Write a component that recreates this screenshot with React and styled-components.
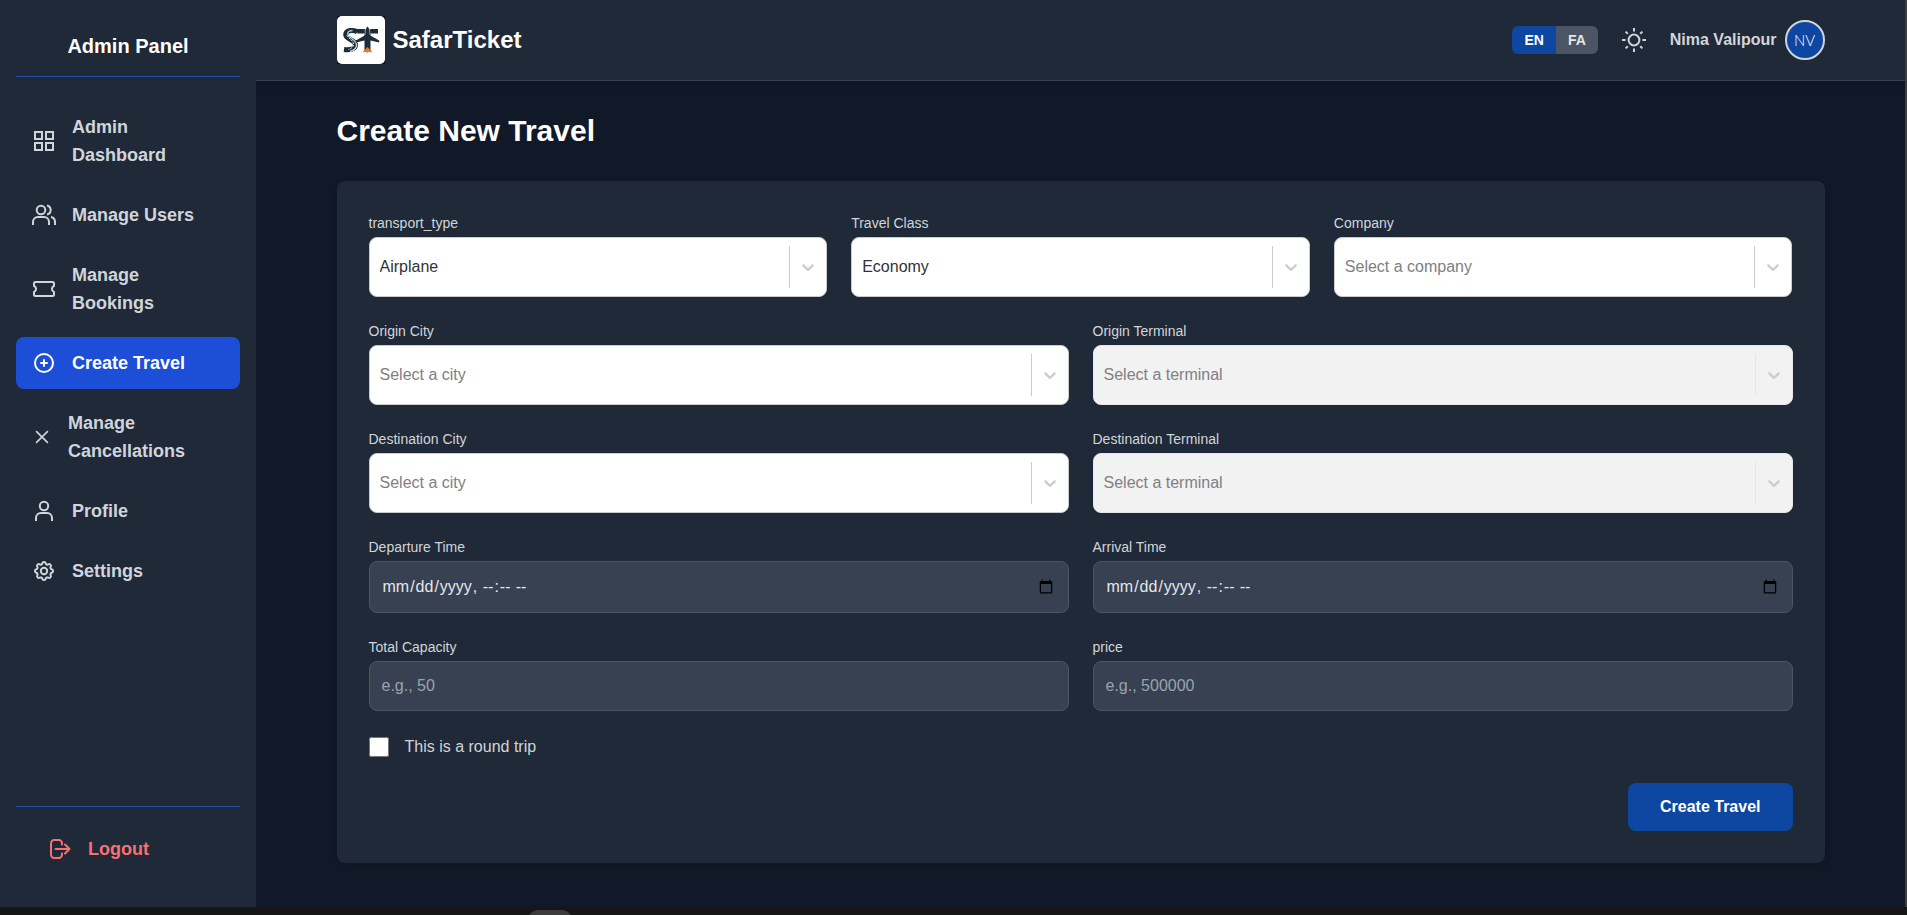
import React from "react";
import styled, { createGlobalStyle } from "styled-components";

const GlobalStyle = createGlobalStyle`
  *, *::before, *::after { box-sizing: border-box; }
  html, body { margin: 0; }
  body {
    background: #161616;
    color: #fff;
    font-family: "Liberation Sans", Arial, sans-serif;
    font-size: 16px;
    line-height: 24px;
  }
  button, input, select { font: inherit; color: inherit; }
`;

const Window = styled.div`
  height: 100vh;
  overflow: hidden;
  display: flex;
  flex-direction: column;
`;

const Shell = styled.div`
  flex: 1;
  min-height: 0;
  display: flex;
  background: #111827;
  border-right: 2px solid #3f3f3f;
`;

const Taskbar = styled.footer`
  height: 8px;
  flex: none;
  overflow: hidden;
  background: #161616;
  padding: 3px 0 0 528px;
`;

const TaskbarHandle = styled.div`
  width: 44px;
  height: 20px;
  border-radius: 10px;
  background: #3c3c3c;
`;

const Sidebar = styled.aside`
  width: 256px;
  flex: none;
  display: flex;
  flex-direction: column;
  padding: 16px;
  background: #1f2937;
  z-index: 1;
`;

const SidebarTitle = styled.h2`
  margin: 0 0 24px;
  padding: 16px 0;
  border-bottom: 1px solid #2250a4;
  font-size: 20px;
  line-height: 28px;
  font-weight: 700;
  text-align: center;
`;

const Nav = styled.nav`
  flex: 1;
  display: flex;
  flex-direction: column;
  gap: 8px;
`;

const NavLink = styled.a`
  display: flex;
  align-items: center;
  gap: 16px;
  padding: 12px 16px;
  border-radius: 8px;
  background: ${(p) => (p.$active ? "#1d4ed8" : "transparent")};
  color: ${(p) => (p.$active ? "#fff" : "#d1d5db")};
  font-size: 18px;
  line-height: 28px;
  font-weight: 600;
  text-decoration: none;
`;

const LogoutArea = styled.div`
  padding: 16px;
  border-top: 1px solid #2250a4;
`;

const LogoutButton = styled.button`
  display: flex;
  align-items: center;
  gap: 16px;
  padding: 12px 16px;
  border: 0;
  background: none;
  color: #f87171;
  font-size: 18px;
  line-height: 28px;
  font-weight: 600;
`;

const Content = styled.div`
  flex: 1;
  min-width: 0;
`;

const Container = styled.div`
  max-width: 1536px;
  margin: 0 auto;
  padding: 0 24px;
`;

const Header = styled.header`
  background: #1f2937;
  border-bottom: 1px solid #374151;
  box-shadow: 0 4px 6px rgba(0, 0, 0, 0.1);
`;

const HeaderBar = styled(Container)`
  display: flex;
  align-items: center;
  justify-content: space-between;
  padding: 16px 24px;
`;

const Brand = styled.a`
  display: flex;
  align-items: center;
  gap: 8px;
  color: #fff;
  font-size: 24px;
  line-height: 32px;
  font-weight: 700;
  text-decoration: none;
`;

const HeaderTools = styled.div`
  display: flex;
  align-items: center;
  gap: 24px;
`;

const LanguageSwitch = styled.div`
  display: flex;
  border-radius: 6px;
  overflow: hidden;
`;

const LanguageButton = styled.button`
  padding: 4px 12px;
  border: 0;
  background: ${(p) => (p.$active ? "#0d47a1" : "#4b5563")};
  color: ${(p) => (p.$active ? "#fff" : "#e5e7eb")};
  font-size: 14px;
  line-height: 20px;
  font-weight: 600;
`;

const ThemeButton = styled.button`
  display: flex;
  padding: 0;
  border: 0;
  background: none;
  color: #d1d5db;
`;

const Account = styled.a`
  display: flex;
  align-items: center;
  gap: 8px;
  color: #d1d5db;
  font-weight: 600;
  text-decoration: none;
`;

const Avatar = styled.span`
  width: 40px;
  height: 40px;
  display: flex;
  align-items: center;
  justify-content: center;
  border: 2px solid #d1d5db;
  border-radius: 50%;
  background: #0d47a1;
  color: #fff;
  font-family: Lato, Inter, sans-serif;
  font-size: 15px;
  font-weight: 300;
`;

const Main = styled(Container).attrs({ as: "main" })`
  padding: 32px 24px;
`;

const PageTitle = styled.h1`
  margin: 0 0 32px;
  font-size: 30px;
  line-height: 36px;
  font-weight: 700;
`;

const Card = styled.form`
  display: flex;
  flex-direction: column;
  gap: 24px;
  padding: 32px;
  border-radius: 8px;
  background: #1f2937;
  box-shadow: 0 4px 6px rgba(0, 0, 0, 0.1);
`;

const FieldRow = styled.div`
  display: grid;
  grid-template-columns: repeat(${(p) => p.$columns}, minmax(0, 1fr));
  gap: 24px;
`;

const Field = styled.div`
  display: flex;
  flex-direction: column;
`;

const Label = styled.label`
  margin-bottom: 4px;
  color: #d1d5db;
  font-size: 14px;
  line-height: 20px;
`;

const SelectBox = styled.div`
  position: relative;
  height: 60px;
`;

const Select = styled.select`
  width: 100%;
  height: 100%;
  padding: 0 48px 0 10px;
  appearance: none;
  border: 1px solid ${(p) => (p.disabled ? "#e6e6e6" : "#cccccc")};
  border-radius: 8px;
  background: ${(p) => (p.disabled ? "#f2f2f2" : "#fff")};
  color: ${(p) => (p.$empty ? "#808080" : "#333333")};
  opacity: 1;
`;

const SelectIndicator = styled.span`
  position: absolute;
  top: 9px;
  right: 1px;
  bottom: 9px;
  width: 37px;
  display: flex;
  align-items: center;
  justify-content: center;
  border-left: 1px solid ${(p) => (p.$muted ? "#e6e6e6" : "#cccccc")};
  color: #cccccc;
  pointer-events: none;
`;

const Input = styled.input`
  width: 100%;
  height: ${(p) => (p.type === "datetime-local" ? "52px" : "50px")};
  padding: 12px;
  border: 1px solid #4b5563;
  border-radius: 8px;
  background: #374151;
  color: #e5e7eb;
  &::placeholder { color: #9ca3af; opacity: 1; }
`;

const CheckRow = styled.div`
  display: flex;
  align-items: center;
  gap: 16px;
  color: #d1d5db;
`;

const Checkbox = styled.input`
  width: 20px;
  height: 20px;
  margin: 0;
`;

const Actions = styled.div`
  display: flex;
  justify-content: flex-end;
`;

const SubmitButton = styled.button`
  padding: 12px 32px;
  border: 0;
  border-radius: 8px;
  background: #0d47a1;
  color: #fff;
  font-weight: 600;
`;

const IconSvg = styled.svg`
  flex: none;
`;

const Icon = ({ size = 24, width = 2, children }) => (
  <IconSvg width={size} height={size} viewBox="0 0 24 24" fill="none" stroke="currentColor"
    strokeWidth={width} strokeLinecap="round" strokeLinejoin="round" aria-hidden="true">
    {children}
  </IconSvg>
);

const icons = {
  dashboard: (
    <Icon>
      <path strokeLinejoin="miter" d="M3 3h7v7H3zM14 3h7v7h-7zM3 14h7v7H3zM14 14h7v7h-7z" />
    </Icon>
  ),
  users: (
    <Icon>
      <path strokeLinecap="butt" d="M1 22v-3a5 5 0 0 1 5-5h6a5 5 0 0 1 5 5v3M23 22v-3a5 5 0 0 0-4-4.900M15 2.500a4.600 4.600 0 0 1 0 9" />
      <circle cx="9" cy="7" r="4.300" />
    </Icon>
  ),
  ticket: (
    <Icon>
      <path d="M2 9V6.500A1.500 1.500 0 0 1 3.500 5h17A1.500 1.500 0 0 1 22 6.500V9a3.200 3.200 0 0 0 0 6v2.500a1.500 1.500 0 0 1-1.500 1.500h-17A1.500 1.500 0 0 1 2 17.500V15a3.200 3.200 0 0 0 0-6z" />
    </Icon>
  ),
  create: (
    <Icon>
      <circle cx="12" cy="12" r="9" />
      <path d="M12 9v6M9 12h6" />
    </Icon>
  ),
  cancel: (
    <Icon size={20}>
      <path d="m5.500 5.500 13 13M18.500 5.500l-13 13" />
    </Icon>
  ),
  profile: (
    <Icon>
      <circle cx="12" cy="7" r="4.200" />
      <path strokeLinecap="butt" d="M4 22v-3a5 5 0 0 1 5-5h6a5 5 0 0 1 5 5v3" />
    </Icon>
  ),
  settings: (
    <Icon>
      <circle cx="12" cy="12" r="3.200" />
      <path d="M10.3 4.300c.4-1.750 3-1.750 3.400 0a1.700 1.700 0 0 0 2.600 1.100c1.500-1 3.300.9 2.400 2.400a1.700 1.700 0 0 0 1 2.500c1.800.4 1.800 3 0 3.400a1.700 1.700 0 0 0-1 2.600c.9 1.500-.9 3.300-2.400 2.400a1.700 1.700 0 0 0-2.600 1c-.4 1.800-3 1.800-3.400 0a1.700 1.700 0 0 0-2.600-1c-1.500.9-3.300-.9-2.400-2.400a1.700 1.700 0 0 0-1-2.600c-1.800-.4-1.800-3 0-3.400a1.700 1.700 0 0 0 1-2.500c-.9-1.500.9-3.400 2.400-2.400 1 .6 2.300.1 2.600-1.100z" />
    </Icon>
  ),
};

const LogoutIcon = () => (
  <Icon>
    <path d="M14 7.500V6.200a3.200 3.200 0 0 0-3.200-3.200H6.200A3.200 3.200 0 0 0 3 6.200v11.600A3.200 3.200 0 0 0 6.200 21h4.600a3.200 3.200 0 0 0 3.200-3.200v-1.300M7.500 12H21.500M17 7.500l4.500 4.500-4.500 4.500" />
  </Icon>
);

const SunIcon = () => (
  <Icon>
    <circle cx="12" cy="12" r="5.400" />
    <path strokeLinecap="butt" d="M12 0v3.400M12 20.600V24M0 12h3.600M20.400 12H24M3.600 3.600l2.200 2.200M18.200 18.200l2.200 2.200M3.600 20.400l2.200-2.200M18.200 5.800l2.200-2.200" />
  </Icon>
);

const ChevronIcon = () => (
  <svg width="20" height="20" viewBox="0 0 20 20" fill="currentColor" aria-hidden="true">
    <path d="M4.516 7.548c0.436-0.446 1.043-0.481 1.576 0l3.908 3.747 3.908-3.747c0.533-0.481 1.141-0.446 1.574 0 0.436 0.445 0.408 1.197 0 1.615-0.406 0.418-4.695 4.502-4.695 4.502-0.217 0.223-0.502 0.335-0.787 0.335s-0.570-0.112-0.789-0.335c0 0-4.287-4.084-4.695-4.502s-0.436-1.170 0-1.615z" />
  </svg>
);

const Logo = () => (
  <svg width="48" height="48" viewBox="0 0 48 48" aria-hidden="true">
    <path d="M0 0h48v48H0z" fill="#0b0d10" />
    <rect width="48" height="48" rx="5" fill="#fff" />
    <path d="M20.500 16C17 13.300 8.700 14 8.700 18.800c0 4.700 9.800 4.700 9.800 10 0 4.500-5.500 5.400-11.500 4.600" fill="none" stroke="#1b2c3b" strokeWidth="5" />
    <path d="M15.500 14.500c-4 .2-5.500 2-4.500 4.500 1.300 3 8.500 5 8.500 10 0 3-3 5.500-6.500 6.500" fill="none" stroke="#c9d0d6" strokeWidth="1.400" />
    <path d="M10 19.500c2 3.500 7 5 6.500 9.500-.3 2-2 3.500-5 4.500" fill="none" stroke="#f4f6f7" strokeWidth="1" strokeDasharray="2 1" />
    <path d="M19.500 13H41v4.500H20.500z" fill="#1b2c3b" />
    <path d="M27.500 17h6v17h-6z" fill="#1b2c3b" />
    <path d="M28.300 12v6.500M32.700 12v6.500" stroke="#fff" strokeWidth=".8" />
    <path d="M30.500 10.500c1.300 1.200 1.900 3.200 1.900 5.500v3l9.800 5.500v2l-9.800-2.200-.6 8.200 2.700 3h-8l2.700-3-.6-8.200-9.800 2.200v-2l9.800-5.500v-3c0-2.300.6-4.300 1.900-5.500z" fill="#1b2c3b" />
    <path d="m30.500 31 1.500 1.500 3.500 4-3.700-.7-1.300 1.200-1.300-1.200-3.700.7 3.500-4z" fill="#ef7622" />
  </svg>
);

const navItems = [
  { icon: "dashboard", text: "Admin Dashboard" },
  { icon: "users", text: "Manage Users" },
  { icon: "ticket", text: "Manage Bookings" },
  { icon: "create", text: "Create Travel", active: true },
  { icon: "cancel", text: "Manage Cancellations" },
  { icon: "profile", text: "Profile" },
  { icon: "settings", text: "Settings" },
];

const SelectField = ({ id, label, value, empty, disabled }) => (
  <Field>
    <Label htmlFor={id}>{label}</Label>
    <SelectBox>
      <Select id={id} $empty={empty} disabled={disabled}>
        <option>{value}</option>
      </Select>
      <SelectIndicator $muted={disabled}>
        <ChevronIcon />
      </SelectIndicator>
    </SelectBox>
  </Field>
);

const InputField = ({ id, label, ...rest }) => (
  <Field>
    <Label htmlFor={id}>{label}</Label>
    <Input id={id} {...rest} />
  </Field>
);

export default function App() {
  return (
    <Window>
      <GlobalStyle />
      <Shell>
        <Sidebar>
          <SidebarTitle>Admin Panel</SidebarTitle>
          <Nav>
            {navItems.map((item) => (
              <NavLink key={item.text} href="#" $active={item.active}>
                {icons[item.icon]}
                <span>{item.text}</span>
              </NavLink>
            ))}
          </Nav>
          <LogoutArea>
            <LogoutButton type="button">
              <LogoutIcon />
              Logout
            </LogoutButton>
          </LogoutArea>
        </Sidebar>
        <Content>
          <Header>
            <HeaderBar>
              <Brand href="#">
                <Logo />
                SafarTicket
              </Brand>
              <HeaderTools>
                <LanguageSwitch>
                  <LanguageButton type="button" $active>EN</LanguageButton>
                  <LanguageButton type="button">FA</LanguageButton>
                </LanguageSwitch>
                <ThemeButton type="button" aria-label="Toggle theme">
                  <SunIcon />
                </ThemeButton>
                <Account href="#">
                  Nima Valipour
                  <Avatar>NV</Avatar>
                </Account>
              </HeaderTools>
            </HeaderBar>
          </Header>
          <Main>
            <PageTitle>Create New Travel</PageTitle>
            <Card>
              <FieldRow $columns={3}>
                <SelectField id="transport" label="transport_type" value="Airplane" />
                <SelectField id="class" label="Travel Class" value="Economy" />
                <SelectField id="company" label="Company" value="Select a company" empty />
              </FieldRow>
              <FieldRow $columns={2}>
                <SelectField id="origin-city" label="Origin City" value="Select a city" empty />
                <SelectField id="origin-terminal" label="Origin Terminal" value="Select a terminal" empty disabled />
              </FieldRow>
              <FieldRow $columns={2}>
                <SelectField id="destination-city" label="Destination City" value="Select a city" empty />
                <SelectField id="destination-terminal" label="Destination Terminal" value="Select a terminal" empty disabled />
              </FieldRow>
              <FieldRow $columns={2}>
                <InputField id="departure" label="Departure Time" type="datetime-local" />
                <InputField id="arrival" label="Arrival Time" type="datetime-local" />
              </FieldRow>
              <FieldRow $columns={2}>
                <InputField id="capacity" label="Total Capacity" type="number" placeholder="e.g., 50" />
                <InputField id="price" label="price" type="number" placeholder="e.g., 500000" />
              </FieldRow>
              <CheckRow>
                <Checkbox id="round-trip" type="checkbox" />
                <label htmlFor="round-trip">This is a round trip</label>
              </CheckRow>
              <Actions>
                <SubmitButton type="button">Create Travel</SubmitButton>
              </Actions>
            </Card>
          </Main>
        </Content>
      </Shell>
      <Taskbar>
        <TaskbarHandle />
      </Taskbar>
    </Window>
  );
}
